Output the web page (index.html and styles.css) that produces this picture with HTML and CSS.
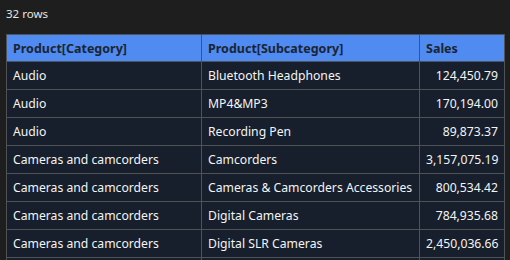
FILE: index.html
```html
<!DOCTYPE html>
<html>
<head>
<meta charset="utf-8">
<link rel="stylesheet" href="styles.css">
</head>
<body>
<div class="view">
  <div class="count">32 rows</div>
  <table class="grid">
    <colgroup>
      <col class="c1"><col class="c2"><col class="c3">
    </colgroup>
    <thead>
      <tr><th>Product[Category]</th><th>Product[Subcategory]</th><th>Sales</th></tr>
    </thead>
    <tbody>
      <tr><td>Audio</td><td>Bluetooth Headphones</td><td class="num">124,450.79</td></tr>
      <tr><td>Audio</td><td>MP4&amp;MP3</td><td class="num">170,194.00</td></tr>
      <tr><td>Audio</td><td>Recording Pen</td><td class="num">89,873.37</td></tr>
      <tr><td>Cameras and camcorders</td><td>Camcorders</td><td class="num">3,157,075.19</td></tr>
      <tr><td>Cameras and camcorders</td><td>Cameras &amp; Camcorders Accessories</td><td class="num">800,534.42</td></tr>
      <tr><td>Cameras and camcorders</td><td>Digital Cameras</td><td class="num">784,935.68</td></tr>
      <tr><td>Cameras and camcorders</td><td>Digital SLR Cameras</td><td class="num">2,450,036.66</td></tr>
      <tr class="cut"><td></td><td></td><td></td></tr>
    </tbody>
  </table>
</div>
</body>
</html>
```
FILE: styles.css
```css
html, body {
  margin: 0;
  padding: 0;
  background: #1e1e1e;
  height: 100%;
  overflow: hidden;
}
.view {
  padding: 6px 6px 0 6px;
  font-family: "Segoe UI", "Noto Sans", "Open Sans", sans-serif;
  font-size: 11.5px;
  color: #e6e6e6;
}
.count {
  height: 16px;
  line-height: 16px;
  margin-bottom: 12px;
}
.grid {
  border-collapse: collapse;
  width: 498px;
  table-layout: fixed;
  font-size: 12.2px;
}
.c1 { width: 195px; }
.c2 { width: 218px; }
.c3 { width: 85px; }
.grid th, .grid td {
  border: 1px solid #505356;
  padding: 0 6px;
  height: 27px;
  white-space: nowrap;
  overflow: hidden;
  text-align: left;
}
.grid th {
  background: #4f8bf0;
  color: #1c2433;
  font-weight: 700;
  height: 26px;
  font-size: 12.5px;
}
.grid td {
  background: #161f2b;
  color: #f4f4f4;
}
.grid td.num {
  text-align: right;
}
```
